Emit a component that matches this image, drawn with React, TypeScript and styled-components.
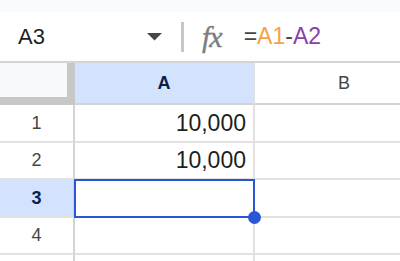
import React from 'react';
import styled, { createGlobalStyle } from 'styled-components';

interface Row {
    id: number;
    value: string;
    label: boolean;
}

const GlobalStyle = createGlobalStyle`
    html, body {
        margin: 0;
        padding: 0;
        background-color: #ffffff;
        overflow: hidden;
    }

    body {
        font-family: 'Liberation Sans', Arial, sans-serif;
    }
`;

const Page = styled.div`
    width: 400px;
    height: 261px;
    overflow: hidden;
`;

const TopStrip = styled.div`
    height: 12px;
    background-color: #f9fbfd;
`;

const FormulaBar = styled.div`
    display: flex;
    align-items: center;
    height: 49px;
    border-bottom: 2px solid #d4d4d4;
    background-color: #ffffff;
`;

const NameBox = styled.div`
    display: flex;
    align-items: center;
    justify-content: space-between;
    width: 162px;
    padding: 0 0 0 18px;
    box-sizing: border-box;
    font-size: 22px;
    color: #1f1f1f;
`;

const Separator = styled.div`
    width: 3px;
    height: 30px;
    margin-left: 19px;
    background-color: #c7c7c7;
`;

const FxIcon = styled.span`
    margin-left: 18px;
    font-family: 'Liberation Serif', 'Times New Roman', serif;
    font-style: italic;
    font-size: 30px;
    color: #7d7d7d;
    letter-spacing: -1px;
    -webkit-text-stroke: 0.4px #7d7d7d;
`;

const Formula = styled.div`
    margin-left: 22px;
    font-size: 23px;
    color: #444746;
`;

const Ref = styled.span<{ $color: string }>`
    color: ${(props) => props.$color};
`;

const Sheet = styled.div`
    display: grid;
    grid-template-columns: 75px 180px 180px;
`;

const Corner = styled.div`
    height: 42px;
    box-sizing: border-box;
    background-color: #f8f9fa;
    border-right: 8px solid #c7c7c7;
    border-bottom: 8px solid #c7c7c7;
`;

const ColHeader = styled.div<{ $selected?: boolean }>`
    display: flex;
    align-items: center;
    justify-content: center;
    height: 42px;
    box-sizing: border-box;
    background-color: ${(props) => (props.$selected ? '#d3e3fd' : '#ffffff')};
    border-right: 2px solid #e1e1e1;
    border-bottom: 2px solid #d4d4d4;
    font-size: 18px;
    font-weight: ${(props) => (props.$selected ? 700 : 400)};
    color: ${(props) => (props.$selected ? '#0a1f4d' : '#444746')};
`;

const RowHeader = styled.div<{ $selected?: boolean; $height: number }>`
    display: flex;
    align-items: center;
    justify-content: center;
    height: ${(props) => props.$height}px;
    box-sizing: border-box;
    background-color: ${(props) => (props.$selected ? '#d3e3fd' : '#ffffff')};
    border-right: 2px solid #d4d4d4;
    border-bottom: 2px solid #e1e1e1;
    font-size: 18px;
    font-weight: ${(props) => (props.$selected ? 700 : 400)};
    color: ${(props) => (props.$selected ? '#0a1f4d' : '#444746')};
`;

const Cell = styled.div<{ $selected?: boolean; $height: number }>`
    position: relative;
    display: flex;
    align-items: center;
    justify-content: flex-end;
    height: ${(props) => props.$height}px;
    padding-right: 7px;
    box-sizing: border-box;
    border-right: 2px solid #e1e1e1;
    border-bottom: 2px solid #e1e1e1;
    font-size: 23px;
    color: #1f1f1f;

    ${(props) =>
        props.$selected &&
        `
        &::before {
            content: '';
            position: absolute;
            top: -1px;
            left: -1px;
            right: -2px;
            bottom: -2px;
            border: 2px solid #2a56d6;
        }

        &::after {
            content: '';
            position: absolute;
            right: -8px;
            bottom: -8px;
            width: 13px;
            height: 13px;
            border-radius: 50%;
            background-color: #2a56d6;
            z-index: 2;
        }
    `}
`;

// row 5 only peeks in at the bottom edge, its number is below the fold
const rows: Row[] = [
    { id: 1, value: '10,000', label: true },
    { id: 2, value: '10,000', label: true },
    { id: 3, value: '', label: true },
    { id: 4, value: '', label: true },
    { id: 5, value: '', label: false },
];

const rowHeights = [38, 37, 38, 37, 38];

const App: React.FC = () => {
    const selectedRow = 3;

    return (
        <>
            <GlobalStyle />
            <Page>
                <TopStrip />
                <FormulaBar>
                    <NameBox>
                        <span>A3</span>
                        <svg width="15" height="8" viewBox="0 0 15 8">
                            <polygon points="0,0 15,0 7.5,7.5" fill="#444746" />
                        </svg>
                    </NameBox>
                    <Separator />
                    <FxIcon>fx</FxIcon>
                    <Formula>
                        =<Ref $color="#f6a245">A1</Ref>-<Ref $color="#8a3ea8">A2</Ref>
                    </Formula>
                </FormulaBar>
                <Sheet>
                    <Corner />
                    <ColHeader $selected>A</ColHeader>
                    <ColHeader>B</ColHeader>
                    {rows.map((row, i) => (
                        <React.Fragment key={row.id}>
                            <RowHeader $selected={row.id === selectedRow} $height={rowHeights[i]}>
                                {row.label ? row.id : null}
                            </RowHeader>
                            <Cell $selected={row.id === selectedRow} $height={rowHeights[i]}>
                                {row.value}
                            </Cell>
                            <Cell $height={rowHeights[i]} />
                        </React.Fragment>
                    ))}
                </Sheet>
            </Page>
        </>
    );
};

export default App;
